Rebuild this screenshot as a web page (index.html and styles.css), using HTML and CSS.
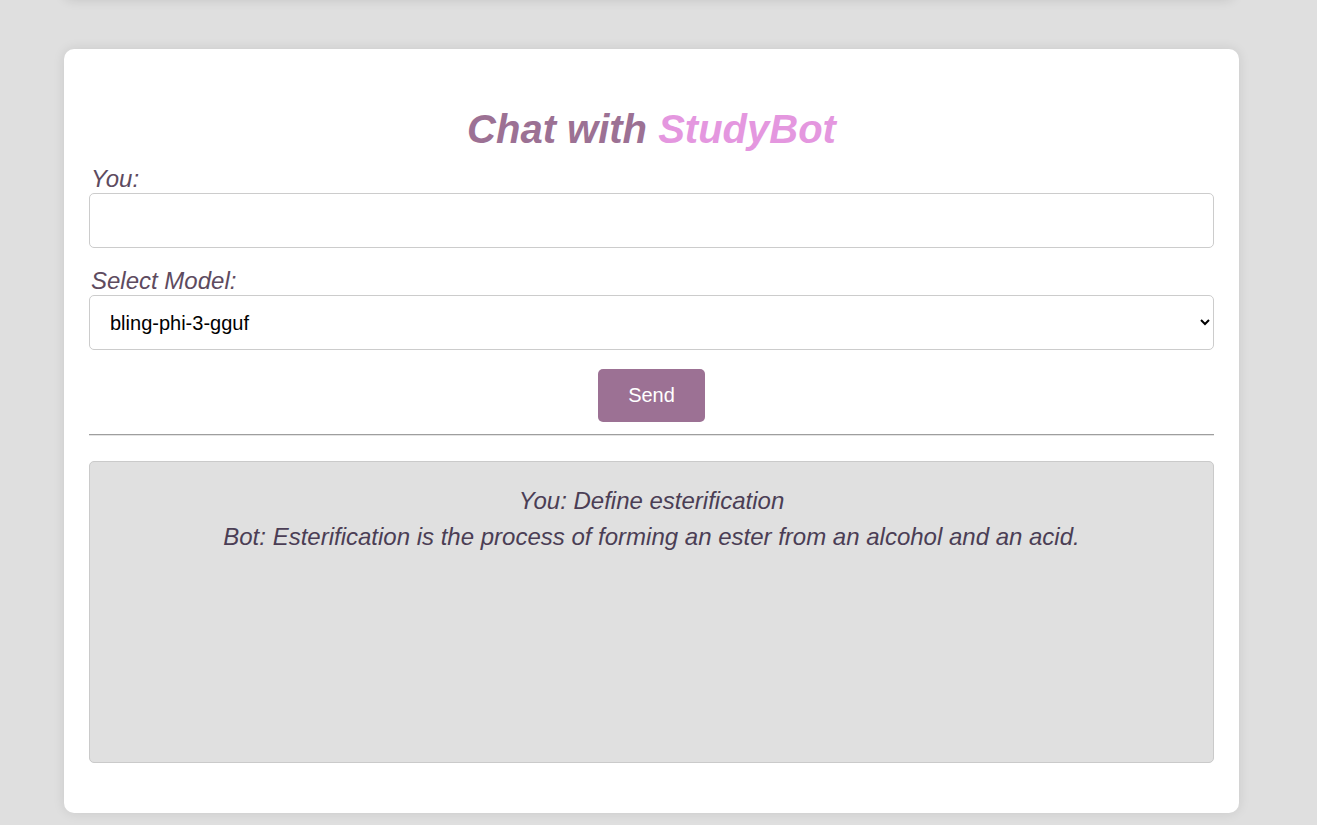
FILE: index.html
```html
<!DOCTYPE html>
<html lang="en">
<head>
<meta charset="utf-8">
<title>Chat with StudyBot</title>
<link rel="stylesheet" href="styles.css">
</head>
<body>
  <div class="prev-card"></div>
  <main class="card">
    <h1 class="title">Chat with <span class="accent">StudyBot</span></h1>
    <label class="label" for="msg">You:</label>
    <input class="field" id="msg" type="text">
    <label class="label" for="model">Select Model:</label>
    <select class="field select" id="model">
      <option>bling-phi-3-gguf</option>
    </select>
    <div class="actions">
      <button class="send" type="button">Send</button>
    </div>
    <hr class="divider">
    <section class="chat">
      <p class="msg">You: Define esterification</p>
      <p class="msg">Bot: Esterification is the process of forming an ester from an alcohol and an acid.</p>
    </section>
  </main>
</body>
</html>
```

FILE: styles.css
```css
html, body {
  margin: 0;
  padding: 0;
}
body {
  background: #dfdfdf;
  font-family: "Liberation Sans", Arial, sans-serif;
  height: 825px;
  overflow: hidden;
}
.prev-card {
  height: 40px;
  margin: -40px 82px 0 63px;
  background: #ffffff;
  border-radius: 10px;
  box-shadow: 0 0 12px rgba(0, 0, 0, 0.12);
}
.card {
  margin: 49px 78px 0 64px;
  background: #ffffff;
  border-radius: 10px;
  box-shadow: 0 0 12px rgba(0, 0, 0, 0.1);
  padding: 57px 25px 50px;
  display: flex;
  flex-direction: column;
}
.title {
  margin: 0 0 13px;
  text-align: center;
  font-size: 40px;
  line-height: 46px;
  font-style: italic;
  font-weight: bold;
  color: #9c7194;
}
.accent {
  color: #e497df;
}
.label {
  display: block;
  font-size: 24px;
  line-height: 28px;
  font-style: italic;
  color: #5e4b5f;
  padding-left: 2px;
}
.field {
  box-sizing: border-box;
  width: 100%;
  height: 55px;
  padding: 15px;
  font-family: "Liberation Sans", Arial, sans-serif;
  font-size: 20px;
  border: 1px solid #cccccc;
  border-radius: 5px;
  background: #ffffff;
  color: #000000;
  margin: 0 0 19px;
}
.select {
  padding: 0 12px 0 16px;
}
.actions {
  display: flex;
  justify-content: center;
}
.send {
  font-family: "Liberation Sans", Arial, sans-serif;
  font-size: 20px;
  line-height: 23px;
  padding: 15px 30px;
  border: none;
  border-radius: 5px;
  background: #9c7194;
  color: #ffffff;
}
.divider {
  margin: 12px 0 25px;
  border: none;
  border-top: 1px solid #9e9e9e;
  border-bottom: 1px solid #e4e4e4;
  height: 0;
}
.chat {
  box-sizing: border-box;
  height: 302px;
  padding: 21px 20px;
  background: #e0e0e0;
  border: 1px solid #cacaca;
  border-radius: 5px;
  text-align: center;
}
.msg {
  margin: 0;
  font-size: 24px;
  line-height: 36px;
  font-style: italic;
  color: #4b3e55;
}
```
